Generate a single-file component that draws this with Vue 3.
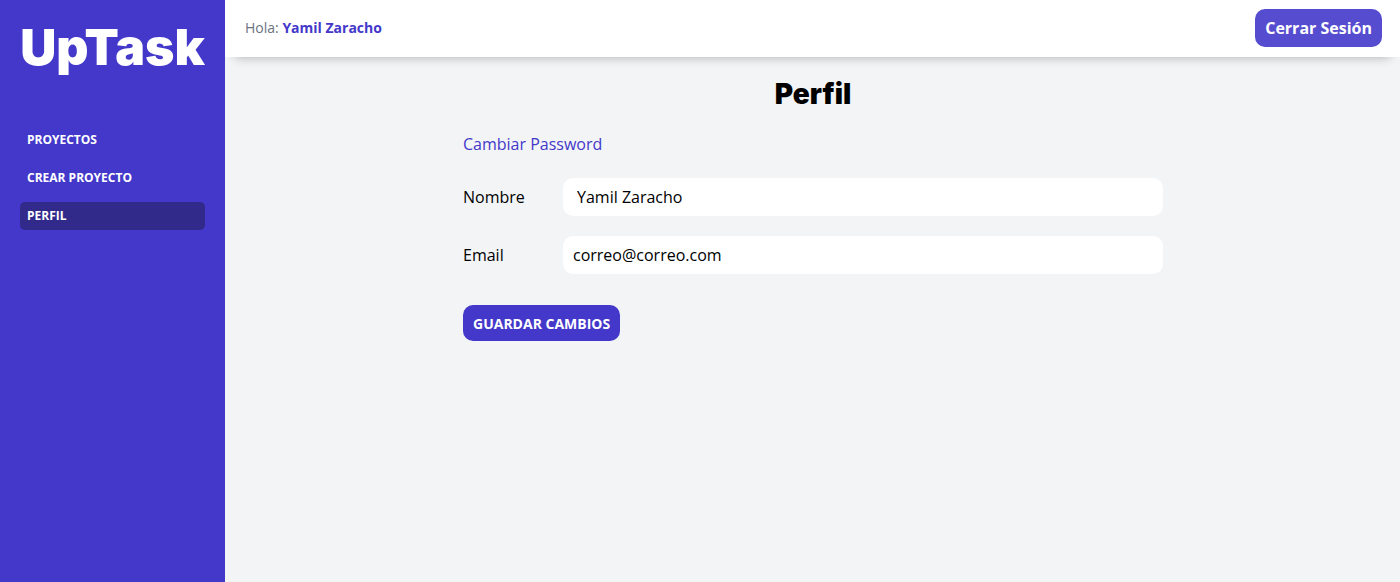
<script setup>
import { ref } from 'vue'

const links = [
  { label: 'Proyectos', href: '#proyectos' },
  { label: 'Crear Proyecto', href: '#crear' },
  { label: 'Perfil', href: '#perfil', active: true },
]
const user = 'Yamil Zaracho'
const nombre = ref('Yamil Zaracho')
const email = ref('correo@correo.com')
</script>

<template>
  <div class="dashboard">
    <aside class="sidebar">
      <h2 class="logo">UpTask</h2>
      <nav class="nav">
        <a v-for="l in links" :key="l.label" :href="l.href" class="nav-link" :class="{ active: l.active }">{{ l.label }}</a>
      </nav>
    </aside>
    <div class="main">
      <header class="bar">
        <p class="hello">Hola: <span>{{ user }}</span></p>
        <button type="button" class="logout">Cerrar Sesión</button>
      </header>
      <main class="content">
        <h1 class="title">Perfil</h1>
        <div class="panel">
          <a href="#password" class="link">Cambiar Password</a>
          <form class="form" @submit.prevent>
            <div class="field">
              <label for="nombre">Nombre</label>
              <input id="nombre" v-model="nombre" class="name-input" type="text">
            </div>
            <div class="field">
              <label for="email">Email</label>
              <input id="email" v-model="email" type="email">
            </div>
            <button type="submit" class="save">Guardar Cambios</button>
          </form>
        </div>
      </main>
    </div>
  </div>
</template>

<style>
body {
  margin: 0;
  background: #f3f4f6;
}
</style>

<style scoped>
.dashboard,
.dashboard * {
  box-sizing: border-box;
}
.dashboard {
  display: grid;
  grid-template-columns: 225px 1fr;
  min-height: 100vh;
  font-family: "Open Sans", sans-serif;
  font-size: 16px;
  color: #000;
  background: #f3f4f6;
}
.sidebar {
  padding: 20px;
  background: #4338ca;
}
.logo {
  margin: 0 0 52px;
  font-family: Inter, sans-serif;
  font-size: 50px;
  font-weight: 900;
  line-height: 54px;
  text-align: center;
  color: #fff;
}
.nav {
  display: flex;
  flex-direction: column;
  gap: 10px;
}
.nav-link {
  padding: 5px 7px;
  border-radius: 5px;
  font-size: 12px;
  line-height: 18px;
  font-weight: 700;
  text-transform: uppercase;
  text-decoration: none;
  color: #fff;
}
.nav-link.active {
  background: #312a8a;
}
.bar {
  display: flex;
  align-items: center;
  justify-content: space-between;
  padding: 9px 18px 10px 20px;
  background: #fff;
  box-shadow: 0 10px 10px -10px rgba(0, 0, 0, 0.3);
}
.hello {
  margin: 0;
  font-size: 14px;
  line-height: 20px;
  color: #6b7280;
}
.hello span {
  font-weight: 700;
  color: #4338ca;
}
button {
  padding: 0 10px;
  border: 0;
  border-radius: 10px;
  font-family: inherit;
  font-weight: 700;
  color: #fff;
  background: #4338ca;
  cursor: pointer;
}
.logout {
  height: 38px;
  font-size: 16px;
  background: #564cd0;
}
.content {
  padding: 17px 20px 17px 21px;
}
.title {
  margin: 0 0 18px;
  font-family: Inter, sans-serif;
  font-size: 28px;
  font-weight: 900;
  line-height: 40px;
  text-align: center;
}
.panel {
  max-width: 700px;
  margin: 0 auto;
}
.link {
  line-height: 24px;
  color: #4338ca;
  text-decoration: none;
}
.form {
  margin-top: 22px;
}
.field {
  display: flex;
  align-items: center;
  margin-bottom: 20px;
}
.field label {
  flex: 0 0 100px;
}
.field input {
  flex: 1;
  min-width: 0;
  height: 38px;
  padding: 0 10px;
  border: 0;
  border-radius: 10px;
  font: inherit;
  color: inherit;
  background: #fff;
}
.field .name-input {
  padding: 0 14px;
}
.save {
  height: 36px;
  margin-top: 11px;
  font-size: 14px;
  text-transform: uppercase;
}
</style>
